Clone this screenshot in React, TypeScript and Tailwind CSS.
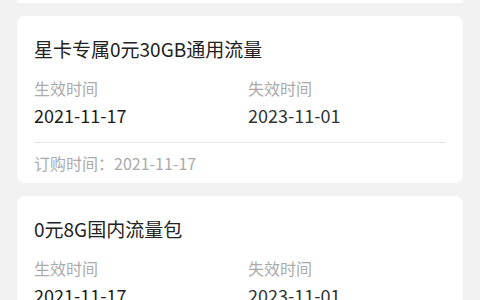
import React from "react";

type Item = { title: string; start: string; end: string; order: string };

const items: Item[] = [
  { title: "星卡专属0元30GB通用流量", start: "2021-11-17", end: "2023-11-01", order: "2021-11-17" },
  { title: "0元8G国内流量包", start: "2021-11-17", end: "2023-11-01", order: "2021-11-17" },
];

function Card({ item }: { item: Item }) {
  return (
    <div className="bg-white rounded-[8px] px-[17px] pt-[21px] pb-[9px]">
      <div className="text-[19px] leading-[24px] text-[#222222]">{item.title}</div>
      <div className="grid grid-cols-[214px_1fr] mt-[16px]">
        <div className="flex flex-col gap-[4px]">
          <span className="text-[16px] leading-[22px] text-[#ababab]">生效时间</span>
          <span className="text-[18px] leading-[24px] text-[#1c1c1c]">{item.start}</span>
        </div>
        <div className="flex flex-col gap-[4px]">
          <span className="text-[16px] leading-[22px] text-[#ababab]">失效时间</span>
          <span className="text-[18px] leading-[24px] text-[#333333]">{item.end}</span>
        </div>
      </div>
      <div className="h-px bg-[#e6e6e6] mt-[15px]" />
      <div className="mt-[9px] text-[16px] leading-[22px] text-[#ababab]">订购时间：{item.order}</div>
    </div>
  );
}

export default function App() {
  return (
    <div
      className="w-[480px] h-[300px] overflow-hidden bg-[#f2f2f2]"
      style={{ fontFamily: '"Noto Sans CJK SC", "Noto Sans", sans-serif' }}
    >
      <div className="flex flex-col gap-[13px] px-[17px]">
        <div className="h-[3px] bg-white rounded-b-[8px]" />
        {items.map((it, i) => (
          <Card key={i} item={it} />
        ))}
      </div>
    </div>
  );
}
